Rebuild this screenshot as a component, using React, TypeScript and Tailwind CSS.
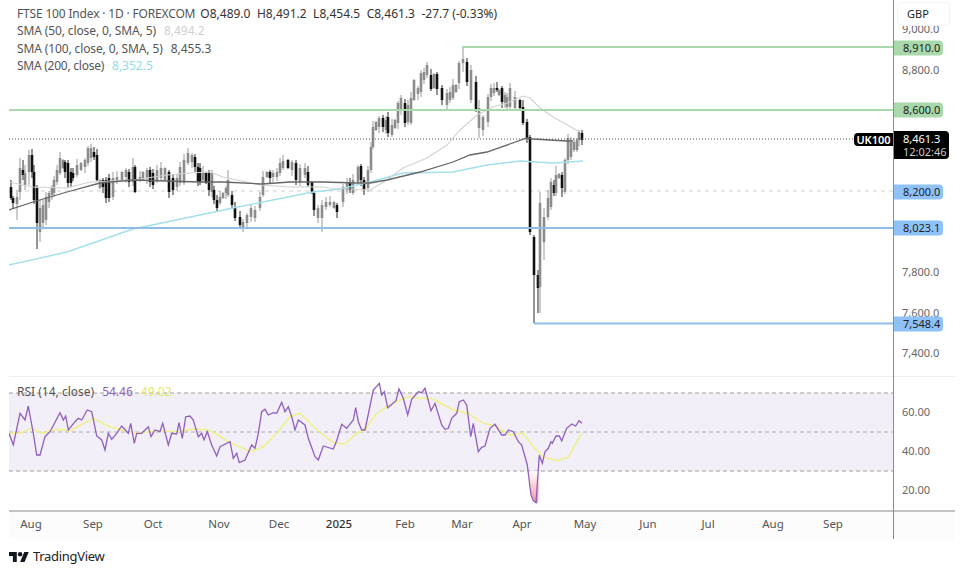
import React from 'react';

// [x, bodyTop, bodyBottom, up] in page pixels; wick top / bottom are optional
type Candle = [number, number, number, number, number?, number?];

const candles: Candle[] = [
  [11, 187, 198, 0, 180, 200], [13, 198, 203, 0], [17, 197, 204, 1, 190, 220], [20, 168, 192, 1, 158, 200], [23, 170, 175, 0, 160, 180],
  [25, 173, 185, 1, 165, 190], [29, 155, 172, 1, 150, 185], [32, 155, 172, 0, 149, 178], [34, 172, 200, 0, 165, 204], [37, 188, 223, 0, 185, 249],
  [40, 208, 232, 1, 200, 242], [43, 205, 223, 1, 200, 228], [46, 197, 220, 1, 192, 225], [49, 193, 202, 1], [52, 188, 195, 1], [54, 180, 193, 1],
  [57, 170, 182, 1], [60, 158, 173, 1], [63, 160, 168, 1], [65, 162, 172, 0], [68, 163, 183, 0], [71, 172, 183, 0], [73, 173, 178, 0], [77, 165, 175, 1],
  [81, 163, 170, 1], [85, 160, 167, 1], [88, 148, 163, 1, 146, 166], [91, 148, 158, 1], [94, 152, 157, 0], [97, 155, 180, 0], [100, 180, 188, 1], [103, 180, 187, 0],
  [106, 180, 198, 0], [109, 178, 198, 0], [113, 178, 197, 1, 172, 200], [117, 177, 182, 1], [122, 172, 180, 1], [126, 170, 177, 1], [129, 172, 182, 0], [133, 167, 182, 1, 158, 186],
  [135, 167, 192, 0, 165, 193], [140, 177, 180, 1], [143, 172, 180, 1], [147, 170, 178, 1], [150, 170, 182, 0], [153, 173, 185, 0], [157, 170, 180, 1], [161, 168, 178, 1],
  [165, 168, 180, 1], [169, 172, 192, 0], [173, 178, 190, 0], [177, 178, 187, 1], [180, 167, 183, 1], [184, 160, 183, 1], [188, 153, 163, 1, 148, 165], [192, 155, 162, 1],
  [195, 157, 167, 0], [198, 167, 182, 0], [200, 168, 182, 0], [203, 172, 180, 1], [206, 173, 183, 0], [209, 172, 190, 0], [212, 173, 192, 1], [214, 190, 200, 0],
  [217, 200, 208, 0], [220, 197, 203, 1], [223, 193, 198, 1], [226, 188, 193, 1], [228, 180, 195, 1, 170, 197], [232, 195, 205, 0], [235, 207, 218, 0], [240, 217, 225, 0],
  [243, 222, 227, 1, 219, 232], [247, 215, 223, 1], [251, 208, 217, 1], [255, 210, 218, 1], [260, 197, 208, 1], [263, 177, 195, 1], [267, 172, 177, 1], [270, 172, 178, 0],
  [273, 173, 177, 1], [277, 172, 177, 1], [280, 163, 173, 1], [283, 161, 168, 1], [288, 160, 168, 0], [292, 162, 170, 1], [296, 163, 180, 0], [300, 168, 182, 1],
  [305, 168, 175, 1], [308, 172, 185, 0], [312, 182, 193, 0], [314, 193, 210, 0], [318, 208, 218, 1], [322, 205, 218, 1, 200, 232], [326, 202, 207, 1], [330, 202, 205, 1],
  [334, 202, 208, 1], [337, 205, 212, 0], [343, 187, 202, 1], [347, 182, 190, 1], [350, 183, 190, 0], [353, 180, 193, 1], [358, 167, 182, 1, 165, 185], [361, 166, 180, 0], [364, 180, 190, 0],
  [368, 170, 188, 1], [371, 147, 170, 1], [373, 127, 147, 1], [376, 122, 130, 1], [379, 118, 127, 1], [383, 118, 127, 0], [386, 120, 130, 1], [388, 117, 133, 0, 112, 137],
  [392, 125, 135, 1], [395, 120, 128, 1], [398, 103, 123, 1], [401, 98, 110, 1], [405, 103, 123, 0], [408, 105, 122, 1], [411, 98, 123, 1], [414, 80, 100, 1], [418, 88, 94, 1],
  [421, 73, 92, 1], [424, 72, 80, 1], [427, 65, 75, 1, 62, 78], [431, 75, 89, 0], [434, 74, 88, 1], [437, 74, 89, 0], [442, 88, 100, 0], [447, 93, 105, 1], [450, 92, 100, 1],
  [453, 85, 98, 1], [456, 85, 92, 1], [459, 63, 83, 1], [463, 59, 63, 1, 48, 72], [467, 62, 82, 0], [471, 70, 100, 1], [476, 82, 110, 0], [479, 108, 128, 1, 100, 138], [483, 117, 130, 1],
  [488, 97, 122, 1], [491, 88, 97, 1], [494, 88, 93, 1], [497, 88, 90, 0], [499, 90, 95, 1], [502, 88, 102, 0], [505, 95, 103, 1], [507, 97, 107, 1], [510, 88, 107, 1],
  [515, 97, 108, 1], [520, 100, 108, 0], [523, 107, 123, 0, 100, 125], [527, 122, 138, 0], [530, 137, 232, 0, 135, 235], [534, 237, 275, 0, 235, 323],
  [538, 275, 288, 0, 270, 313], [540, 203, 287, 1, 192, 313], [544, 217, 242, 1, 208, 260], [548, 198, 217, 1, 190, 220], [551, 182, 207, 1, 178, 210], [554, 185, 193, 0],
  [556, 175, 193, 1, 166, 196], [559, 174, 178, 1], [562, 175, 188, 0, 172, 197], [565, 160, 192, 1, 158, 194], [568, 138, 160, 1], [571, 142, 157, 1], [574, 142, 150, 1, 138, 152],
  [577, 140, 150, 1, 138, 152], [579, 132, 140, 1], [582, 133, 140, 0],
];

const sma200 = '9,265 67,252 133,229 200,215 233,208 313,192 340,189 370,182 403,173 453,172 487,165 520,161 553,163 583,161';
const sma100 = '9,210 33,202 67,192 100,183 133,180 200,182 223,182 262,184 290,182 323,182 357,183 370,183 387,180 420,172 453,162 470,155 487,152 527,138 533,139 567,141 573,141';
const sma50 = '9,182 33,187 67,188 90,182 133,180 167,175 190,173 210,172 223,177 260,185 290,187 323,187 330,188 370,190 387,180 403,168 427,158 447,145 460,130 477,115 493,107 507,103 523,96 530,98 540,108 553,117 580,132';

// rsi traced in zoom coordinates: [x, y] at 3x, split at the two crops
const rsiLeft = [27,190,40,225,60,130,75,150,85,108,100,190,110,255,120,255,135,200,150,185,180,128,190,150,197,138,205,180,225,155,235,145,245,150,262,120,275,125,290,198,305,210,315,240,325,190,335,208,350,190,365,168,385,190,392,160,403,220,410,190,425,190,445,170,453,200,465,180,480,185,488,160,505,225,515,190,530,192,537,158,547,205,557,140,570,138,580,150,595,200,605,190,612,210,622,185,635,225,650,258,660,230,690,215,700,265,710,250,718,278,735,270,755,225,765,235,775,190,785,125,795,118,805,135,820,128,830,130,845,97,855,125,865,110,875,140,885,180,895,150,915,165,925,205,945,260,955,270];
const rsiRight = [10,228,40,237,50,212,65,163,80,175,100,150,107,113,115,155,125,180,135,180,160,60,178,40,185,75,193,65,203,113,228,92,237,57,250,85,263,135,275,88,295,65,305,68,315,55,333,122,345,100,365,165,375,178,385,175,395,145,410,130,418,95,430,90,440,105,452,200,460,160,475,245,485,232,495,228,510,175,525,163,545,195,555,195,565,180,580,185,595,215,605,225,622,285,633,375,640,392,648,398,658,255,667,280,675,245,685,235,693,215,697,220,708,198,718,198,725,213,740,175,755,162,767,168,777,152,786,160];
const maLeft = [27,190,60,190,95,175,125,190,170,178,210,182,280,145,330,170,400,190,480,182,530,185,580,177,630,180,680,212,750,245,790,230,830,190,870,140,900,130,955,183];
const maRight = [40,218,75,222,110,190,135,180,165,135,200,110,260,80,340,88,400,120,445,130,490,160,525,168,570,195,610,190,640,230,670,260,710,272,745,262,770,215,786,190];

function toPoints(arr: number[], offsetX: number) {
  const out: string[] = [];
  for (let i = 0; i < arr.length; i += 2) {
    out.push(`${(offsetX + arr[i] / 3).toFixed(1)},${(370 + arr[i + 1] / 3).toFixed(1)}`);
  }
  return out.join(' ');
}

const priceTicks = [
  { label: '9,000.0', y: 28 },
  { label: '8,800.0', y: 69 },
  { label: '7,800.0', y: 271 },
  { label: '7,600.0', y: 312 },
  { label: '7,400.0', y: 352 },
];

const badges = [
  { label: '8,910.0', y: 48, cls: 'bg-[#a9d8ab]' },
  { label: '8,600.0', y: 110, cls: 'bg-[#a9d8ab]' },
  { label: '8,200.0', y: 191.5, cls: 'bg-[#90c2fa]' },
  { label: '8,023.1', y: 227.5, cls: 'bg-[#90c2fa]' },
  { label: '7,548.4', y: 323.5, cls: 'bg-[#90c2fa]' },
];

const months = [
  { label: 'Aug', x: 31 }, { label: 'Sep', x: 93 }, { label: 'Oct', x: 153 }, { label: 'Nov', x: 219 }, { label: 'Dec', x: 279 },
  { label: '2025', x: 339, bold: true }, { label: 'Feb', x: 405 }, { label: 'Mar', x: 462 }, { label: 'Apr', x: 522 }, { label: 'May', x: 585 },
  { label: 'Jun', x: 648 }, { label: 'Jul', x: 708 }, { label: 'Aug', x: 773 }, { label: 'Sep', x: 833 },
];

function Candles() {
  return (
    <g>
      {candles.map(([x, top, bot, up, wt, wb], i) => {
        const color = up ? '#8c8c8c' : '#111111';
        const wickTop = wt ?? top - 1 - ((i * 7) % 6);
        const wickBot = wb ?? bot + 1 + ((i * 5) % 6);
        return (
          <g key={i}>
            <line x1={x} x2={x} y1={wickTop} y2={wickBot} stroke={color} strokeWidth={0.9} />
            <rect x={x - 1.3} y={top} width={2.6} height={bot - top} fill={color} />
          </g>
        );
      })}
    </g>
  );
}

function MainChart() {
  return (
    <svg className="absolute inset-0 h-full w-full" viewBox="9 0 884 376">
      <line x1={9} x2={893} y1={191} y2={191} stroke="#cfcfcf" strokeDasharray="4 4" />
      <Candles />
      <polyline points={sma200} fill="none" stroke="#a3e0ec" strokeWidth={1.4} />
      <polyline points={sma50} fill="none" stroke="#d2d2d2" strokeWidth={1.1} />
      <polyline points={sma100} fill="none" stroke="#666666" strokeWidth={1.3} />
      <line x1={9} x2={893} y1={139} y2={139} stroke="#555555" strokeDasharray="1 2" />
      <line x1={462} x2={893} y1={47} y2={47} stroke="#a9d8ab" strokeWidth={2} />
      <line x1={9} x2={893} y1={110} y2={110} stroke="#a9d8ab" strokeWidth={2} />
      <line x1={9} x2={893} y1={228} y2={228} stroke="#90bde8" strokeWidth={2} />
      <line x1={534} x2={893} y1={323.5} y2={323.5} stroke="#90bde8" strokeWidth={2} />
    </svg>
  );
}

function RsiChart() {
  return (
    <svg className="absolute inset-0 h-full w-full" viewBox="9 377 884 133">
      <defs>
        <linearGradient id="oversold" x1="0" y1="0" x2="0" y2="1">
          <stop offset="0" stopColor="#ffffff" />
          <stop offset="1" stopColor="#f7959f" />
        </linearGradient>
      </defs>
      <rect x={9} y={393} width={884} height={78} fill="#f3eff9" />
      <line x1={9} x2={893} y1={393} y2={393} stroke="#a0a0a0" strokeDasharray="4 3" />
      <line x1={9} x2={893} y1={432} y2={432} stroke="#b0b0b0" strokeDasharray="4 3" />
      <line x1={9} x2={893} y1={471} y2={471} stroke="#a0a0a0" strokeDasharray="4 3" />
      <polygon points="529.5,471 531,495 533,500 536,502.5 538,503 539,488 540.5,471" fill="url(#oversold)" />
      <polyline points={`${toPoints(maLeft, 0)} ${toPoints(maRight, 320)}`} fill="none" stroke="#f0f08c" strokeWidth={1.6} />
      <polyline points={`${toPoints(rsiLeft, 0)} ${toPoints(rsiRight, 320)}`} fill="none" stroke="#8f5fbd" strokeWidth={1.3} />
    </svg>
  );
}

function Legend() {
  return (
    <div className="absolute left-2 top-[5px] flex flex-col text-xs leading-[17.4px] text-[#555555]">
      <div className="flex items-center whitespace-nowrap">
        <span className="tracking-[-0.17px]">FTSE 100 Index · 1D · FOREXCOM</span>
        <span className="ml-[5px] flex gap-[6.5px] text-[#333333]">
          <span>O8,489.0</span>
          <span>H8,491.2</span>
          <span>L8,454.5</span>
          <span>C8,461.3</span>
          <span>-27.7 (-0.33%)</span>
        </span>
      </div>
      <div className="flex gap-2">
        <span className="tracking-[-0.12px]">SMA (50, close, 0, SMA, 5)</span>
        <span className="text-[#d0d0d0]">8,494.2</span>
      </div>
      <div className="flex gap-2">
        <span className="tracking-[-0.12px]">SMA (100, close, 0, SMA, 5)</span>
        <span className="text-[#555555]">8,455.3</span>
      </div>
      <div className="flex gap-2">
        <span className="tracking-[-0.25px]">SMA (200, close)</span>
        <span className="text-[#8fdcea]">8,352.5</span>
      </div>
    </div>
  );
}

function PriceAxis() {
  return (
    <div className="relative h-[377px] shrink-0 overflow-hidden border-b border-[#eeeeee] text-[11px]">
      {priceTicks.map((t) => (
        <span
          key={t.label}
          className="absolute left-[8px] -translate-y-1/2 leading-none text-[#666666]"
          style={{ top: t.y }}
        >
          {t.label}
        </span>
      ))}
      {badges.map((b) => (
        <span
          key={b.label}
          className={`absolute left-0 flex h-[15px] w-[49px] -translate-y-1/2 items-center rounded-r-sm pl-[9px] text-[#222222] ${b.cls}`}
          style={{ top: b.y }}
        >
          {b.label}
        </span>
      ))}
      <div className="absolute left-0 top-[131px] flex h-[28px] w-[55px] flex-col rounded-r-sm bg-black pl-[9px] pt-px leading-[13px] text-white">
        <span>8,461.3</span>
        <span className="text-[#cccccc]">12:02:46</span>
      </div>
      <div className="absolute left-[3px] top-[2px] flex h-[24px] w-[53px] items-center rounded border border-[#f3f3f3] bg-white pl-[9px] text-[#222222]">
        GBP
      </div>
    </div>
  );
}

export default function App() {
  return (
    <div className="flex h-[574px] w-[965px] flex-col overflow-hidden bg-white font-['Noto_Sans',sans-serif]">
      <div className="flex h-[539px] pl-[9px]">
        <div className="flex w-[884px] flex-col">
          <div className="relative h-[377px] shrink-0 border-b border-[#eeeeee]">
            <MainChart />
            <Legend />
            <span className="absolute left-[845px] top-[133px] w-[39px] rounded-l-sm bg-black text-center text-[11px] font-semibold leading-[13px] text-white">
              UK100
            </span>
          </div>
          <div className="relative h-[135px] shrink-0 border-b-2 border-[#c4c4c4]">
            <RsiChart />
            <div className="absolute left-2 top-[6px] flex gap-2 text-xs leading-[17px] text-[#555555]">
              <span>RSI (14, close)</span>
              <span className="text-[#8f5fbd]">54.46</span>
              <span className="text-[#e6e86a]">49.02</span>
            </div>
          </div>
          <div className="relative grow bg-[#fcfcfc] text-[11.5px] text-[#555555]">
            {months.map((m) => (
              <span
                key={m.label + m.x}
                className={`absolute top-[5px] -translate-x-1/2 leading-[14px] ${m.bold ? 'font-medium text-[#333333]' : ''}`}
                style={{ left: m.x - 9 }}
              >
                {m.label}
              </span>
            ))}
          </div>
        </div>
        <div className="flex w-[62px] flex-col border-l border-[#8a8a8a]">
          <PriceAxis />
          <div className="flex h-[135px] shrink-0 flex-col justify-between border-b-2 border-[#c4c4c4] pb-[13px] pl-[8px] pt-[28px] text-[11px] leading-[14px] text-[#666666]">
            <span>60.00</span>
            <span>40.00</span>
            <span>20.00</span>
          </div>
          <div className="grow bg-[#fcfcfc]" />
        </div>
      </div>
      <div className="flex items-center gap-1 pl-[9px] pt-[9px] text-[#222222]">
        <svg width="20" height="12" viewBox="0 4 36 18" fill="#131722">
          <path d="M14 22H7V11H0V4h14v18zM28 22h-8l7.5-18h8L28 22z" />
          <circle cx="20" cy="8" r="4" />
        </svg>
        <span className="text-[13px] leading-[17px] tracking-[-0.3px]">TradingView</span>
      </div>
    </div>
  );
}
